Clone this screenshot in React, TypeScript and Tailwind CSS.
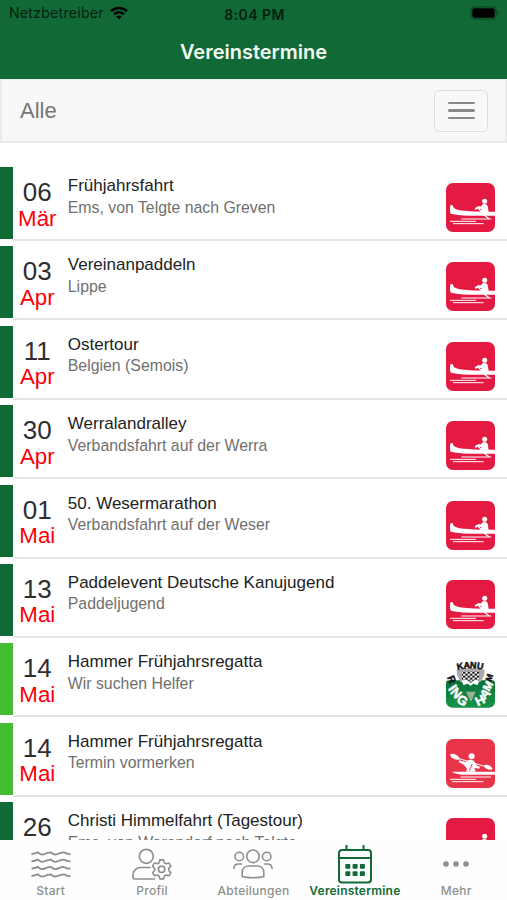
import React from 'react';
import { clsx } from 'clsx';

type IconKind = 'canoe' | 'kayak' | 'club';

interface Termin {
  day: string;
  month: string;
  title: string;
  subtitle: string;
  icon: IconKind;
  highlight?: boolean;
}

const termine: Termin[] = [
  { day: '06', month: 'Mär', title: 'Frühjahrsfahrt', subtitle: 'Ems, von Telgte nach Greven', icon: 'canoe' },
  { day: '03', month: 'Apr', title: 'Vereinanpaddeln', subtitle: 'Lippe', icon: 'canoe' },
  { day: '11', month: 'Apr', title: 'Ostertour', subtitle: 'Belgien (Semois)', icon: 'canoe' },
  { day: '30', month: 'Apr', title: 'Werralandralley', subtitle: 'Verbandsfahrt auf der Werra', icon: 'canoe' },
  { day: '01', month: 'Mai', title: '50. Wesermarathon', subtitle: 'Verbandsfahrt auf der Weser', icon: 'canoe' },
  { day: '13', month: 'Mai', title: 'Paddelevent Deutsche Kanujugend', subtitle: 'Paddeljugend', icon: 'canoe' },
  { day: '14', month: 'Mai', title: 'Hammer Frühjahrsregatta', subtitle: 'Wir suchen Helfer', icon: 'club', highlight: true },
  { day: '14', month: 'Mai', title: 'Hammer Frühjahrsregatta', subtitle: 'Termin vormerken', icon: 'kayak', highlight: true },
  { day: '26', month: 'Mai', title: 'Christi Himmelfahrt (Tagestour)', subtitle: 'Ems, von Warendorf nach Telgte', icon: 'canoe' },
];

function CanoeIcon() {
  return (
    <svg viewBox="0 0 147 147" className="size-[49px]">
      <rect width="147" height="147" rx="21" fill="#e51a43" />
      <path d="M14 66l6 1c2 9 7 12 18 14 20 4 50 5 75 5l34 0v12h-30c-35 1-75 0-103-6-3-9-3-17 0-26z" fill="#fff" />
      <circle cx="116" cy="55" r="7.5" fill="#fff" />
      <path d="M108 65c6-4 15-2 17 4l3 18h-25l4-9-12-1-6 4-3-5 10-6h10z" fill="#fff" />
      <path d="M96 75l22 24 11 8" stroke="#fff" strokeWidth="4" fill="none" />
      <path d="M46 108h90M12 115h78M21 122h92" stroke="#fff" strokeWidth="3" />
    </svg>
  );
}

function KayakIcon() {
  return (
    <svg viewBox="0 0 147 147" className="size-[49px]">
      <rect width="147" height="147" rx="21" fill="#e83348" />
      <path d="M30 56l92 28" stroke="#fff" strokeWidth="3" />
      <path d="M13 45c8-3 20 1 27 11l2 5c-10 3-23-1-29-10zM115 78c9-3 20 2 25 11l-4 3c-9 1-18-3-22-10z" fill="#fff" />
      <circle cx="77" cy="52" r="9" fill="#fff" />
      <path d="M64 65c8-5 19-3 22 4l7 11 9 3-2 6-15-2 4 11H60l3-9-10-12-15-8 2-5 19 5z" fill="#fff" />
      <path d="M78 76l-8 19" stroke="#e83348" strokeWidth="3" />
      <path d="M18 98h129v9H52c-14-1-27-4-34-9z" fill="#fff" />
      <path d="M44 114h91M12 121h78M18 128h94" stroke="#fff" strokeWidth="3" />
    </svg>
  );
}

const clubLetters = [
  { char: 'K', x: 42, y: 22, rotate: -12, size: 27, fill: '#111' },
  { char: 'A', x: 62, y: 18, rotate: -4, size: 27, fill: '#111' },
  { char: 'N', x: 82, y: 18, rotate: 4, size: 27, fill: '#111' },
  { char: 'U', x: 103, y: 21, rotate: 10, size: 27, fill: '#111' },
  { char: 'R', x: 17, y: 61, rotate: 68, size: 31, fill: '#111' },
  { char: 'I', x: 20, y: 86, rotate: 56, size: 40, fill: '#fff' },
  { char: 'N', x: 31, y: 102, rotate: 48, size: 39, fill: '#fff' },
  { char: 'G', x: 49, y: 124, rotate: 30, size: 39, fill: '#fff' },
  { char: 'H', x: 102, y: 124, rotate: -26, size: 38, fill: '#fff' },
  { char: 'A', x: 117, y: 104, rotate: -42, size: 38, fill: '#fff' },
  { char: 'M', x: 126, y: 81, rotate: -60, size: 34, fill: '#fff' },
  { char: 'M', x: 130, y: 56, rotate: -72, size: 26, fill: '#111' },
];

function ClubIcon() {
  return (
    <svg viewBox="0 0 147 147" className="size-[49px]">
      <defs>
        <pattern id="checker" width="14" height="12" patternUnits="userSpaceOnUse" x="51" y="38">
          <rect width="14" height="12" fill="#fff" />
          <path d="M0 0h7v6H0zM7 6h7v6H7z" fill="#111" />
        </pattern>
        <linearGradient id="clubGreen" x1="0" y1="0" x2="0" y2="1">
          <stop offset="0" stopColor="#08723a" />
          <stop offset="1" stopColor="#159447" />
        </linearGradient>
      </defs>
      <path d="M0 72c0-5 3-8 8-8h131c5 0 8 3 8 8v54c0 13-8 20-20 20H20c-12 0-20-8-20-20z" fill="url(#clubGreen)" />
      <path d="M32 32c25-8 58-8 84 0-1 18-4 26-12 36H43C36 56 32 45 32 32z" fill="#aaa" />
      <path d="M48 38h52v27H48z" fill="url(#checker)" />
      <path d="M47 65l13-3 14 10 14-10 12 3-5 13-14-4-7 7-8-7-14 4z" fill="#fff" />
      <path d="M60 98h29l-14 31z" fill="#9aaf94" />
      <g fontFamily="'Liberation Sans', sans-serif" fontWeight="bold" textAnchor="middle">
        {clubLetters.map((l, i) => (
          <text
            key={i}
            transform={`translate(${l.x} ${l.y}) rotate(${l.rotate})`}
            dy="0.35em"
            fontSize={l.size}
            fill={l.fill}
            stroke={l.fill}
            strokeWidth="1.5"
          >
            {l.char}
          </text>
        ))}
      </g>
    </svg>
  );
}

const icons = { canoe: CanoeIcon, kayak: KayakIcon, club: ClubIcon };

function StatusBar() {
  return (
    <div className="grid h-7 grid-cols-3 items-center pl-[9px] pr-[7px] font-['Inter','Liberation_Sans',sans-serif] text-[14px] text-[#05200f]">
      <div className="flex items-center gap-[6px]">
        <span className="leading-5 tracking-[0.3px] -mt-0.5">Netzbetreiber</span>
        <svg viewBox="0 0 18 14" className="-mt-0.5 h-[14px] w-[18px]" fill="none" stroke="#000" strokeWidth="2.5">
          <path d="M1 5.2C5.5.8 12.5.8 17 5.2" />
          <path d="M4 8.3c2.8-2.7 7.2-2.7 10 0" />
          <path d="M9 13.3L6.1 10.5c1.6-1.5 4.2-1.5 5.8 0z" fill="#000" stroke="none" />
        </svg>
      </div>
      <span className="text-center font-semibold tracking-[0.45px]">8:04 PM</span>
      <svg viewBox="0 0 30 14" className="-mt-0.5 h-[14px] w-[30px] justify-self-end">
        <rect x="0.9" y="0.9" width="25.2" height="12.2" rx="3.5" fill="none" stroke="#0b4924" strokeWidth="1.2" />
        <rect x="2.3" y="2.3" width="22.4" height="9.4" rx="2" fill="#000" />
        <path d="M27.5 5c1.6.6 1.6 3.4 0 4z" fill="#0b4924" />
      </svg>
    </div>
  );
}

function TerminRow({ termin }: { termin: Termin }) {
  const Icon = icons[termin.icon];
  return (
    <li className="flex h-[79.4px] shrink-0 pb-[5.4px]">
      <div className={clsx('h-[72px] w-[13.3px] shrink-0', termin.highlight ? 'bg-[#43bd32]' : 'bg-[#116936]')} />
      <div className="flex flex-1 border-b-2 border-[#e5e5e5]">
        <div className="w-12 pt-[13px] text-center text-[22.3px] leading-[25.5px]">
          <div className="text-[26px] text-[#2e2e2e]">{termin.day}</div>
          <div className="text-[#fb0007]">{termin.month}</div>
        </div>
        <div className="flex-1 pl-[6.5px] pt-2 text-[15.85px] leading-[21.5px]">
          <div className="text-[17px] text-[#222]">{termin.title}</div>
          <div className="text-[#707070]">{termin.subtitle}</div>
        </div>
        <div className="mr-3 pt-4">
          <Icon />
        </div>
      </div>
    </li>
  );
}

function WavesIcon() {
  return (
    <svg viewBox="0 0 40 28" className="mt-px h-7 w-10" fill="none" stroke="currentColor" strokeWidth="1.8">
      {[3, 10.3, 17.6, 25].map((y) => (
        <path key={y} d={`M.5 ${y}q3.2-.2 6.5-1.7q3.2 3.4 6.5 1.7t6.5-1.700q3.2 3.4 6.5 1.700t6.5-1.700q3.2 2 6.5 1.700`} />
      ))}
    </svg>
  );
}

function ProfilIcon() {
  return (
    <svg viewBox="0 0 40 34" className="mt-0.5 h-[34px] w-10" fill="none" stroke="currentColor" strokeWidth="1.7">
      <circle cx="14.3" cy="8.3" r="7" />
      <path d="M22.500 31H2.500c-1 0-1.500-.5-1.500-1.500v-2c0-5 3.500-8 8-8h9" strokeLinecap="round" />
      <path
        d="M28 12.800h4l.8 3.200 2 1 3-.9 2 3.400-2.200 2.300v2.400l2.200 2.300-2 3.400-3-.9-2 1.200-.8 3h-4l-.8-3-2-1.200-3 .9-2-3.400 2.200-2.300v-2.400l-2.200-2.300 2-3.400 3 .9 2-1z"
        transform="translate(1.800 0) scale(.93)"
        strokeLinejoin="round"
      />
      <circle cx="29.6" cy="21.300" r="3.200" />
    </svg>
  );
}

function GroupIcon() {
  return (
    <svg viewBox="0 0 40 30" className="h-[30px] w-10" fill="none" stroke="currentColor" strokeWidth="1.6" strokeLinecap="round">
      <circle cx="20" cy="7.3" r="6.3" />
      <circle cx="6.3" cy="7.5" r="4.300" />
      <circle cx="33.7" cy="7.5" r="4.300" />
      <path d="M9.2 27.5v-4c0-4 2.700-6.500 6.500-6.500h8.600c3.800 0 6.500 2.500 6.500 6.500v4c-5 1.600-16.600 1.600-21.600 0z" />
      <path d="M1 19.500c0-2.800 2-4.500 4.500-4.500h3M39 19.500c0-2.800-2-4.500-4.500-4.500h-3" />
    </svg>
  );
}

function CalendarIcon() {
  return (
    <svg viewBox="0 0 36 40" className="-mt-px h-10 w-9" fill="none" stroke="currentColor" strokeWidth="2">
      <rect x="2" y="6" width="32" height="32.5" rx="3" />
      <path d="M2 14h32M9.500 1v5M26.500 1v5" />
      {[8.3, 15.6, 22.9].map((x) =>
        [20, 27.200].map((y) => <rect key={`${x}-${y}`} x={x} y={y} width="5" height="4.8" rx="0.8" fill="currentColor" stroke="none" />)
      )}
    </svg>
  );
}

function MoreIcon() {
  return (
    <svg viewBox="0 0 28 8" className="h-2 w-7 -mt-px" fill="currentColor">
      <circle cx="4" cy="4" r="2.8" />
      <circle cx="14" cy="4" r="2.8" />
      <circle cx="24" cy="4" r="2.8" />
    </svg>
  );
}

const tabs = [
  { name: 'Start', icon: WavesIcon },
  { name: 'Profil', icon: ProfilIcon },
  { name: 'Abteilungen', icon: GroupIcon },
  { name: 'Vereinstermine', icon: CalendarIcon, active: true },
  { name: 'Mehr', icon: MoreIcon },
];

export default function App() {
  return (
    <div className="flex h-[900px] w-[507px] flex-col overflow-hidden bg-white font-['Liberation_Sans',Arial,sans-serif]">
      <header className="h-[79px] shrink-0 bg-[#116936]">
        <StatusBar />
        <h1 className="pt-[9px] text-center font-['Inter','Liberation_Sans',sans-serif] text-[20px] font-semibold leading-[30px] text-[#f1faf2]">
          Vereinstermine
        </h1>
      </header>

      {/* Filter */}
      <div className="flex h-16 shrink-0 items-center justify-between border-2 border-t border-[#ebebeb] bg-[#f8f8f8] pl-[18px] pr-[17px]">
        <span className="text-[22px] text-[#777]">Alle</span>
        <button className="flex h-[42px] w-[54px] flex-col items-center justify-center gap-[5px] rounded-[5px] border border-[#ddd]">
          <span className="h-[2.3px] w-[27px] rounded-full bg-[#888]" />
          <span className="h-[2.3px] w-[27px] rounded-full bg-[#888]" />
          <span className="h-[2.3px] w-[27px] rounded-full bg-[#888]" />
        </button>
      </div>

      <ul className="flex min-h-0 flex-1 flex-col overflow-hidden pt-6">
        {termine.map((termin, i) => (
          <TerminRow key={i} termin={termin} />
        ))}
      </ul>

      {/* Tab bar */}
      <nav className="grid h-[60px] shrink-0 grid-cols-5 bg-[#fdfefd] font-['Inter','Liberation_Sans',sans-serif] text-[12px] font-medium">
        {tabs.map((tab) => (
          <div key={tab.name} className={clsx('flex flex-col items-center', tab.active ? 'text-[#116936]' : 'text-[#8b908e]')}>
            <div className="flex h-[46px] items-center pt-0.5">
              <tab.icon />
            </div>
            <span className={clsx('whitespace-nowrap leading-[10px]', tab.active ? 'font-semibold tracking-[0.2px]' : 'tracking-[0.25px]')}>
              {tab.name}
            </span>
          </div>
        ))}
      </nav>
    </div>
  );
}
